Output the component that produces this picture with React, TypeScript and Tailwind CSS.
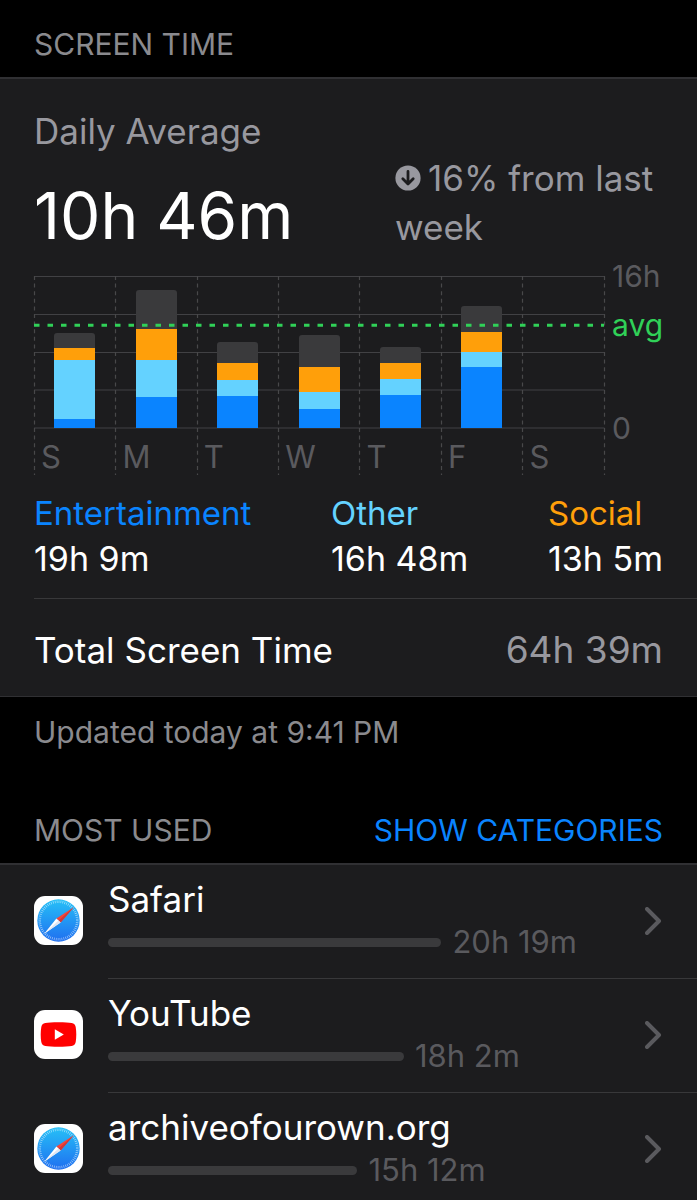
import React, { useId } from "react";

type Day = {
  label: string;
  entertainment: number;
  other: number;
  social: number;
  rest: number;
};

const days: Day[] = [
  { label: "S", entertainment: 9, other: 59, social: 12, rest: 15 },
  { label: "M", entertainment: 31, other: 37, social: 31, rest: 39 },
  { label: "T", entertainment: 32, other: 16, social: 17, rest: 21 },
  { label: "W", entertainment: 19, other: 17, social: 25, rest: 32 },
  { label: "T", entertainment: 33, other: 16, social: 16, rest: 16 },
  { label: "F", entertainment: 61, other: 15, social: 20, rest: 26 },
  { label: "S", entertainment: 0, other: 0, social: 0, rest: 0 },
];

const legend = [
  { name: "Entertainment", time: "19h 9m", color: "text-[#0a84ff]" },
  { name: "Other", time: "16h 48m", color: "text-[#64d2ff]" },
  { name: "Social", time: "13h 5m", color: "text-[#ff9f0a]" },
];

const apps = [
  { name: "Safari", time: "20h 19m", minutes: 1219, icon: "safari" },
  { name: "YouTube", time: "18h 2m", minutes: 1082, icon: "youtube" },
  { name: "archiveofourown.org", time: "15h 12m", minutes: 912, icon: "safari" },
];

const BASE = 168;
const COLUMN = 81.4;

function UsageChart() {
  return (
    <svg
      viewBox="0 0 629 216"
      className="mt-1 block h-auto w-full overflow-visible"
      role="img"
      aria-label="Daily screen time"
    >
      {[16.5, 54.5, 92.5, 130, 168].map((y) => (
        <path key={y} d={`M0 ${y}H570.5`} stroke="#414144" strokeWidth="1.2" />
      ))}
      {[0, 1, 2, 3, 4, 5, 6, 7].map((i) => (
        <path
          key={i}
          d={`M${Math.round(i * COLUMN - 0.2) + 0.5} 16V215`}
          stroke="#48484a"
          strokeWidth="1.2"
          strokeDasharray="4 3.6"
        />
      ))}
      {days.map((d, i) => {
        const x = Math.round(i * COLUMN + 20.4);
        const blue = BASE - d.entertainment;
        const cyan = blue - d.other;
        const orange = cyan - d.social;
        const top = orange - d.rest;
        return (
          <g key={i}>
            {d.rest > 0 && (
              <>
                <path
                  d={`M${x} ${orange}V${top + 3}q0-3 3-3h35q3 0 3 3V${orange}z`}
                  fill="#3a3a3c"
                />
                <rect x={x} y={orange} width="41" height={d.social} fill="#ff9f0a" />
                <rect x={x} y={cyan} width="41" height={d.other} fill="#64d2ff" />
                <rect x={x} y={blue} width="41" height={d.entertainment} fill="#0a84ff" />
              </>
            )}
            <text x={i * COLUMN + 7} y="207.5" fontSize="31" fill="#5a5a5e">
              {d.label}
            </text>
          </g>
        );
      })}
      <path d="M0 65.2H570" stroke="#30d158" strokeWidth="3" strokeDasharray="5.5 8" />
      <text x="578" y="27" fontSize="30" fill="#5a5a5e">16h</text>
      <text x="578" y="76" fontSize="30" fill="#30d158">avg</text>
      <text x="578" y="178.5" fontSize="30" fill="#5a5a5e">0</text>
    </svg>
  );
}

function SafariIcon() {
  const id = useId();
  return (
    <svg viewBox="0 0 49 49" className="size-[49px] shrink-0" aria-hidden="true">
      <defs>
        <linearGradient id={id} x1="0" y1="0" x2="0" y2="1">
          <stop offset="0" stopColor="#26c0f7" />
          <stop offset="1" stopColor="#1f6ff0" />
        </linearGradient>
      </defs>
      <rect width="49" height="49" rx="11" fill="#fff" />
      <circle cx="24.5" cy="24.5" r="21.2" fill={`url(#${id})`} />
      <circle
        cx="24.5"
        cy="24.5"
        r="18.8"
        fill="none"
        stroke="#fff"
        strokeOpacity="0.6"
        strokeWidth="2.6"
        strokeDasharray="0.7 1.26"
      />
      <path d="M39.8 11.2L22.4 22.4l4.2 4.2z" fill="#f5453b" />
      <path d="M39.8 11.2L24.5 24.5l2.1 2.1z" fill="#cf3a3a" />
      <path d="M10.2 37.8L22.4 22.4l4.2 4.2z" fill="#fff" />
      <path d="M10.2 37.8L24.5 24.5l2.1 2.1z" fill="#dfe6f2" />
    </svg>
  );
}

function YouTubeIcon() {
  return (
    <svg viewBox="0 0 49 49" className="size-[49px] shrink-0" aria-hidden="true">
      <rect width="49" height="49" rx="11" fill="#fff" />
      <path
        d="M24.5 12.2c6 0 10.5.3 13.2.7 2.3.4 3.6 1.8 4 4 .8 4.8.8 10.4 0 15.2-.4 2.2-1.7 3.6-4 4-5.4.9-21 .9-26.4 0-2.3-.4-3.6-1.8-4-4-.8-4.8-.8-10.4 0-15.2.4-2.2 1.7-3.6 4-4 2.7-.4 7.2-.7 13.2-.7z"
        fill="#f00"
      />
      <path d="M20.8 19.2v10.6l9-5.3z" fill="#fff" />
    </svg>
  );
}

function DownArrow() {
  return (
    <svg viewBox="0 0 26 26" className="mr-[7px] inline-block size-[26px] align-baseline" aria-hidden="true">
      <circle cx="13" cy="13" r="12.6" fill="#98989f" />
      <path
        d="M13 6.5v12M7.8 13.8L13 19l5.2-5.2"
        fill="none"
        stroke="#1c1c1e"
        strokeWidth="2.8"
        strokeLinecap="round"
        strokeLinejoin="round"
      />
    </svg>
  );
}

function Chevron() {
  return (
    <svg viewBox="0 0 18 28" className="h-[28px] w-[18px] shrink-0" aria-hidden="true">
      <path
        d="M2 2l12 12L2 26"
        fill="none"
        stroke="#5a5a5e"
        strokeWidth="4"
        strokeLinecap="round"
        strokeLinejoin="round"
      />
    </svg>
  );
}

export default function App() {
  return (
    <main className="min-h-screen bg-black font-['Inter',sans-serif] text-white">
      <h1 className="px-[34px] pt-6 pb-[13px] text-[30px] leading-10 font-normal text-[#8a8a8e]">SCREEN TIME</h1>

      <section className="border-t-2 border-b border-[#303033] bg-[#1c1c1e]">
        <div className="px-[34px] pt-7">
          <div className="flex items-end justify-between">
            <div>
              <h2 className="text-[35px] leading-[48px] font-normal text-[#98989f]">Daily Average</h2>
              <p className="mt-[21px] text-[64px] leading-[80px] whitespace-nowrap">10h 46m</p>
            </div>
            <p className="mb-1 w-[268px] text-[35px] leading-[49px] text-[#98989f]">
              <DownArrow />
              16% from last week
            </p>
          </div>
          <UsageChart />
          <dl className="mt-[14px] flex justify-between pb-4 leading-[46px]">
            {legend.map((item) => (
              <div key={item.name}>
                <dt className={`text-[33px] ${item.color}`}>{item.name}</dt>
                <dd className="text-[34px]">{item.time}</dd>
              </div>
            ))}
          </dl>
        </div>
        <div className="ml-[34px] flex items-center justify-between border-t border-[#38383a] pt-[27px] pr-[34px] pb-[22px] leading-[48px]">
          <span className="text-[35px]">Total Screen Time</span>
          <span className="text-[37px] text-[#98989f]">64h 39m</span>
        </div>
      </section>

      <p className="px-[34px] pt-[15px] text-[30px] leading-10 text-[#8a8a8e]">Updated today at 9:41 PM</p>

      <div className="mt-[58px] flex items-center justify-between px-[34px] pb-[13px] text-[30px] leading-10">
        <h2 className="font-normal text-[#8a8a8e]">MOST USED</h2>
        <button type="button" className="text-[#0a84ff]">SHOW CATEGORIES</button>
      </div>

      <ul className="border-t-2 border-[#303033] bg-[#1c1c1e]">
        {apps.map((app, i) => (
          <li key={app.name}>
            <button type="button" className="flex w-full items-center px-[34px] pt-[13px] pb-[9px] text-left">
              {app.icon === "safari" ? <SafariIcon /> : <YouTubeIcon />}
              <span className="ml-[25px] flex-1">
                <span className="block text-[35px] leading-[43px]">{app.name}</span>
                <span className="flex items-center gap-[11px]">
                  <span
                    className="h-[9px] rounded-full bg-[#3a3a3c]"
                    style={{ width: `${(app.minutes / 1219) * 62.1}%` }}
                  />
                  <span className="text-[31px] leading-[42px] whitespace-nowrap text-[#5a5a5e]">{app.time}</span>
                </span>
              </span>
              <Chevron />
            </button>
            {i < apps.length - 1 && <div className="mt-[6px] ml-[108px] border-t border-[#38383a]" />}
          </li>
        ))}
      </ul>
    </main>
  );
}
